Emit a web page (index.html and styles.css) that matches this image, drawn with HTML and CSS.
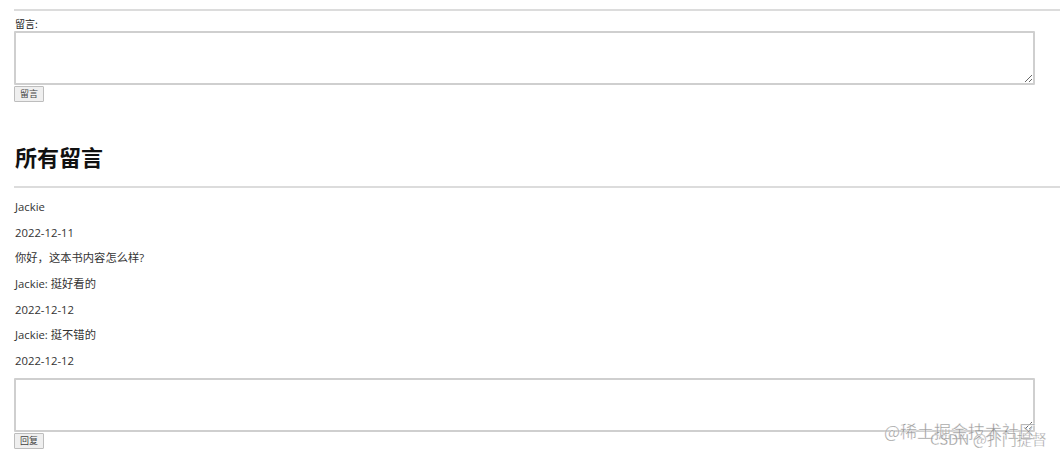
FILE: index.html
```html
<!DOCTYPE html>
<html lang="zh-CN">
<head>
<meta charset="utf-8">
<title>留言</title>
<link rel="stylesheet" href="styles.css">
</head>
<body>
<div class="page">
  <hr class="rule rule-top">
  <form class="msg-form">
    <label class="msg-label">留言:</label>
    <textarea class="msg-box"></textarea>
    <button type="button" class="btn">留言</button>
  </form>
  <h2 class="title">所有留言</h2>
  <hr class="rule rule-title">
  <div class="list">
    <p class="line">Jackie</p>
    <p class="line">2022-12-11</p>
    <p class="line">你好，这本书内容怎么样?</p>
    <p class="line">Jackie: 挺好看的</p>
    <p class="line">2022-12-12</p>
    <p class="line">Jackie: 挺不错的</p>
    <p class="line">2022-12-12</p>
  </div>
  <form class="reply-form">
    <textarea class="msg-box reply-box"></textarea>
    <button type="button" class="btn">回复</button>
  </form>
</div>
<div class="watermark">
  <span class="wm wm-a">@稀土掘金技术社区</span>
  <span class="wm wm-b">CSDN @扑门提督</span>
</div>
</body>
</html>
```

FILE: styles.css
```css
* { box-sizing: border-box; }
html, body { margin: 0; padding: 0; background: #fff; }
body {
  font-family: "Open Sans", "Noto Sans CJK SC", sans-serif;
  color: #333;
  width: 1060px;
  height: 456px;
  overflow: hidden;
  position: relative;
}
.page { padding-left: 14px; }
.rule {
  border: 0;
  border-top: 2px solid #dcdcdc;
  margin: 0;
  width: 1046px;
}
.rule-top { margin-top: 9px; }
.msg-form, .reply-form { display: flex; flex-direction: column; align-items: flex-start; }
.msg-label {
  font-family: "Noto Sans CJK SC", sans-serif;
  font-size: 10px;
  line-height: 10px;
  margin-top: 8px;
  height: 12px;
  color: #222;
  padding-left: 1px;
}
.msg-box {
  display: block;
  width: 1021px;
  height: 54px;
  border: 2px solid #cfcfcf;
  border-radius: 1px;
  margin: 0;
  padding: 2px;
  resize: both;
  background: #fff;
}
.btn {
  height: 16px;
  width: 30px;
  margin: 1px 0 0 0;
  padding: 0;
  font-family: "Noto Sans CJK SC", sans-serif;
  font-size: 9px;
  line-height: 12px;
  color: #444;
  background: #efefef;
  border: 1px solid #bdbdbd;
  border-radius: 1px;
}
.title {
  font-family: "Noto Sans CJK SC", sans-serif;
  font-size: 22px;
  line-height: 30px;
  font-weight: 700;
  color: #111;
  margin: 39px 0 0 1px;
}
.rule-title { margin-top: 15px; }
.list { padding-top: 6px; }
.line {
  margin: 0;
  font-size: 11.3px;
  line-height: 25.67px;
  color: #333;
  padding-left: 1px;
}
.reply-form { margin-top: 4px; }
.watermark {
  position: absolute;
  left: 884px;
  top: 420px;
  width: 176px;
  height: 36px;
}
.wm {
  position: absolute;
  white-space: nowrap;
  color: rgba(120, 120, 120, 0.75);
  font-family: "Noto Sans CJK SC", sans-serif;
  line-height: 20px;
  -webkit-text-stroke: 0.3px #fff;
}
.wm-a { left: 0; top: 1px; font-size: 17px; }
.wm-b { left: 46px; top: 9px; font-size: 15px; }
```
